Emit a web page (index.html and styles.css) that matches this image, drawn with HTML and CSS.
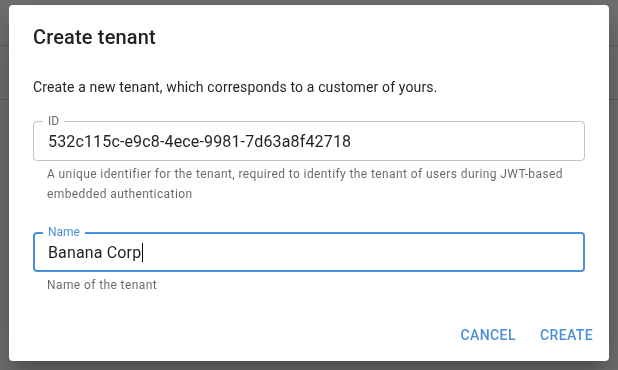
FILE: index.html
```html
<!DOCTYPE html>
<html lang="en">
<head>
  <meta charset="UTF-8">
  <meta name="viewport" content="width=device-width, initial-scale=1.0">
  <title>Create tenant</title>
  <link rel="stylesheet" href="styles.css">
</head>
<body>
  <div class="page">
    <div class="page-header"></div>
    <div class="page-toolbar"></div>
  </div>

  <div class="backdrop"></div>

  <div class="dialog-wrap">
    <div class="dialog" role="dialog" aria-labelledby="dialog-title">
      <h2 id="dialog-title" class="dialog-title">Create tenant</h2>

      <div class="dialog-content">
        <p class="dialog-text">Create a new tenant, which corresponds to a customer of yours.</p>

        <div class="field field-id">
          <div class="field-box">
            <span class="field-label">ID</span>
            <div class="field-value">532c115c-e9c8-4ece-9981-7d63a8f42718</div>
          </div>
          <p class="field-helper">A unique identifier for the tenant, required to identify the tenant of users during JWT-based embedded authentication</p>
        </div>

        <div class="field field-name focused">
          <div class="field-box">
            <span class="field-label">Name</span>
            <div class="field-value">Banana Corp<span class="caret"></span></div>
          </div>
          <p class="field-helper">Name of the tenant</p>
        </div>
      </div>

      <div class="dialog-actions">
        <button class="btn-text">Cancel</button>
        <button class="btn-text">Create</button>
      </div>
    </div>
  </div>
</body>
</html>
```

FILE: styles.css
```css
:root {
  --color-primary: #4a90d9;
  --color-text: rgba(0,0,0,0.87);
  --color-text-muted: rgba(0,0,0,0.6);
  --color-border: rgba(0,0,0,0.23);
  --font-family: Roboto, "Liberation Sans", Arial, sans-serif;
  --radius: 4px;
}
* { box-sizing: border-box; margin: 0; padding: 0; }
html, body { height: 100%; }
body { font-family: var(--font-family); background: #fff; color: var(--color-text); }

/* Page behind the dialog */
.page-header { height: 46px; border-bottom: 1px solid #d6d6d6; }
.page-toolbar { height: 54px; border-bottom: 1px solid #d6d6d6; }

/* Backdrop + dialog */
.backdrop { position: fixed; inset: 0; background: rgba(0,0,0,0.56); }
.dialog-wrap {
  position: fixed;
  inset: 0;
  display: flex;
  justify-content: center;
  align-items: flex-start;
  padding-top: 5px;
}
.dialog {
  width: 600px;
  background: #fff;
  border-radius: var(--radius);
  display: flex;
  flex-direction: column;
  box-shadow: 0 11px 15px -7px rgba(0,0,0,0.2), 0 24px 38px 3px rgba(0,0,0,0.14), 0 9px 46px 8px rgba(0,0,0,0.12);
}
.dialog-title {
  padding: 16px 24px;
  font-size: 20px;
  font-weight: 500;
  line-height: 32px;
  letter-spacing: 0.0075em;
}
.dialog-content { padding: 6px 24px 14px; }
.dialog-text { font-size: 14px; line-height: 24px; letter-spacing: 0.01em; color: var(--color-text); }

/* Outlined text fields */
.field-id { margin-top: 22px; }
.field-name { margin-top: 28px; }
.field-box {
  position: relative;
  height: 40px;
  border: 1px solid var(--color-border);
  border-radius: var(--radius);
  display: flex;
  align-items: center;
  padding: 0 14px;
}
.field-label {
  position: absolute;
  top: -8px;
  left: 9px;
  padding: 0 5px;
  background: #fff;
  font-size: 12px;
  line-height: 14px;
  color: var(--color-text-muted);
}
.field-value { font-size: 16px; letter-spacing: 0.00938em; color: var(--color-text); display: flex; align-items: center; }
.field-helper {
  margin: 3px 14px 0;
  font-size: 12px;
  line-height: 20px;
  letter-spacing: 0.03333em;
  color: var(--color-text-muted);
}
.focused .field-box { border: 2px solid var(--color-primary); padding: 0 13px; }
.focused .field-label { color: var(--color-primary); top: -9px; left: 8px; }
.caret { display: inline-block; width: 1px; height: 19px; background: #000; margin-left: 1px; }

/* Actions */
.dialog-actions { display: flex; justify-content: flex-end; gap: 8px; padding: 8px; }
.btn-text {
  min-width: 64px;
  padding: 6px 8px;
  border: none;
  background: none;
  border-radius: var(--radius);
  font-family: var(--font-family);
  font-size: 14px;
  font-weight: 500;
  line-height: 24px;
  letter-spacing: 0.02857em;
  text-transform: uppercase;
  color: var(--color-primary);
  cursor: pointer;
}
.btn-text:hover { background: rgba(74,144,217,0.06); }
```
